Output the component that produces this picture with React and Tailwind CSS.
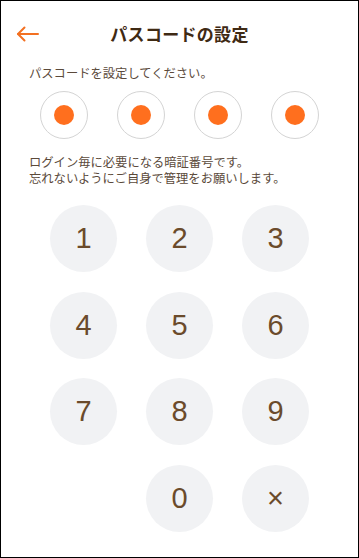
import React from 'react';

const font = { fontFamily: '"Noto Sans CJK JP", "Noto Sans", sans-serif' };

const keys = ['1', '2', '3', '4', '5', '6', '7', '8', '9', '', '0', '×'];

const PinDot = ({ filled }) => (
  <div className="w-[48px] h-[48px] rounded-full border border-[#d4d4d4] flex items-center justify-center">
    {filled && <span className="w-[20px] h-[20px] rounded-full bg-[#ff6f1e]" />}
  </div>
);

const Key = ({ label }) => {
  if (!label) return <div className="w-[67px] h-[67px]" />;
  return (
    <button className="w-[67px] h-[67px] rounded-full bg-[#f1f2f4] flex items-center justify-center text-[29px] text-[#6b4b2b] font-['Liberation_Sans',sans-serif] leading-none">
      {label}
    </button>
  );
};

export default function App() {
  return (
    <div className="w-[359px] h-[558px] border border-black bg-white overflow-hidden" style={font}>
      {/* header */}
      <div className="relative mt-[13px] h-[40px] flex items-center justify-center">
        <button className="absolute left-[15px] top-[12px]">
          <svg width="24" height="16" viewBox="0 0 24 16" fill="none" stroke="#f37021" strokeWidth="2" strokeLinecap="round" strokeLinejoin="round">
            <path d="M22 8H2" />
            <path d="M8.5 1.5L2 8l6.5 6.5" />
          </svg>
        </button>
        <h1 className="text-[17px] font-bold text-[#3f2a14] tracking-[0.3px]">パスコードの設定</h1>
      </div>

      <p className="mt-[11px] pl-[28px] text-[12.3px] leading-[16px] text-[#5b4a3b]">
        パスコードを設定してください。
      </p>

      <div className="mt-[10px] flex justify-center gap-[28.7px]">
        <PinDot filled />
        <PinDot filled />
        <PinDot filled />
        <PinDot filled />
      </div>

      <div className="mt-[15px] pl-[28px] text-[12.3px] leading-[16px] text-[#5b4a3b]">
        <p>ログイン毎に必要になる暗証番号です。</p>
        <p>忘れないようにご自身で管理をお願いします。</p>
      </div>

      <div className="mt-[19px] mx-auto w-[259px] grid grid-cols-3 gap-x-[29px] gap-y-[19.5px]">
        {keys.map((k, i) => (
          <Key key={i} label={k} />
        ))}
      </div>
    </div>
  );
}
